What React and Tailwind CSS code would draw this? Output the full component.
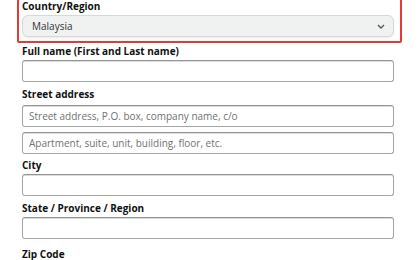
export default function App() {
  const label = "block text-[10px] leading-[14px] font-bold text-[#0f1111]";
  const input =
    "block w-[372px] h-[22px] rounded-[3px] border border-[#a6a6a6] border-t-[#949494] bg-white shadow-[inset_0_1px_0_rgba(15,17,17,0.15)] px-[6px] text-[10px] text-[#0f1111] placeholder:text-[#6f7373] outline-none";
  return (
    <div className="w-[420px] h-[260px] overflow-hidden bg-white font-['Open_Sans',sans-serif]">
      <div className="ml-[17px] w-[385px] -mt-[6px] border-2 border-[#e53935] rounded-[2px] pl-[3px] pr-[5px] pt-[3px] pb-[4px]">
        <span className={label}>Country/Region</span>
        <div className="mt-[2px] h-[22px] w-[372px] rounded-[6px] border border-[#d5d9d9] bg-[#f0f2f2] shadow-[0_1px_2px_rgba(213,217,217,0.6)] flex items-center justify-between pl-[9px] pr-[8px]">
          <span className="text-[10px] text-[#333]">Malaysia</span>
          <svg width="8" height="5" viewBox="0 0 8 5" className="mt-[1px]">
            <path d="M1 1 L4 4 L7 1" fill="none" stroke="#555" strokeWidth="1.4" />
          </svg>
        </div>
      </div>
      <div className="pl-[22px]">
        <span className={label + " mt-[1px]"}>Full name (First and Last name)</span>
        <input className={input + " mt-[2px]"} />
        <span className={label + " mt-[5px]"}>Street address</span>
        <input className={input + " mt-[4px]"} placeholder="Street address, P.O. box, company name, c/o" />
        <input className={input + " mt-[5px]"} placeholder="Apartment, suite, unit, building, floor, etc." />
        <span className={label + " mt-[4px]"}>City</span>
        <input className={input + " mt-[2px]"} />
        <span className={label + " mt-[5px]"}>State / Province / Region</span>
        <input className={input + " mt-[2px]"} />
        <span className={label + " mt-[8px]"}>Zip Code</span>
      </div>
    </div>
  );
}
